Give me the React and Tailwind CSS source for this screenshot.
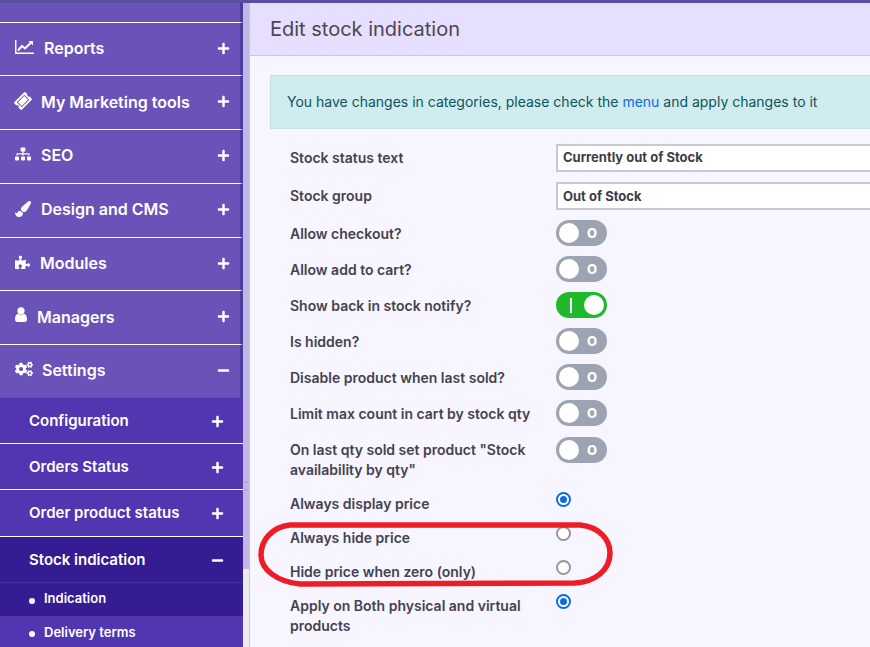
import React from "react";
import { FaTicketAlt, FaSitemap, FaPaintBrush, FaPuzzlePiece, FaCogs, FaPlus, FaMinus } from "react-icons/fa";

const ReportsIcon = () => (
  <svg width="19" height="14" viewBox="0 0 19 14" fill="none" className="-mt-[3px]">
    <path d="M0.75 0v13.25H19" stroke="white" strokeWidth="1.4" />
    <path d="M3 10.5 7 6l3 2.5L16.5 2" stroke="white" strokeWidth="2" />
    <path d="M13.5 1h4.5v4.5z" fill="white" />
  </svg>
);

const ManagerIcon = () => (
  <svg width="12" height="15" viewBox="0 0 12 15" fill="white" className="-mt-[4px]">
    <circle cx="6" cy="3.8" r="3.6" />
    <path d="M0 12.5C0 9 1.5 7 3 6.8c1.8 1.2 4.2 1.2 6 0 1.5.2 3 2.2 3 5.7 0 1.5-1 2.5-2.2 2.5H2.2C1 15 0 14 0 12.5z" />
  </svg>
);

const mainMenu = [
  { label: "Reports", icon: <ReportsIcon />, gap: "gap-[10px]", h: "h-[53px] pb-[2px]" },
  { label: "My Marketing tools", icon: <FaTicketAlt className="text-[16px] -rotate-45 -mt-[2px]" />, gap: "gap-[10px]", h: "h-[54px] pb-[2px]" },
  { label: "SEO", icon: <FaSitemap className="text-[16px] -mt-[2px]" />, gap: "gap-[10px]", h: "h-[54px] pb-[3px]" },
  { label: "Design and CMS", icon: <FaPaintBrush className="text-[16px]" />, gap: "gap-[10px]", h: "h-[54px] pb-[3px]" },
  { label: "Modules", icon: <FaPuzzlePiece className="text-[15px] -mt-[2px]" />, gap: "gap-[10px]", h: "h-[53px] pb-[2px]" },
  { label: "Managers", icon: <ManagerIcon />, gap: "gap-[10px]", h: "h-[54px] pb-[2px]" },
  { label: "Settings", icon: <FaCogs className="text-[18px] -mt-[2px]" />, gap: "gap-[9px]", h: "h-[54px] pb-[3px]", open: true },
];

const subMenu = [
  { label: "Configuration", h: "h-[46px]" },
  { label: "Orders Status", h: "h-[46px]" },
  { label: "Order product status", h: "h-[47px]" },
];

const Toggle = ({ on }) => (
  <div className={`w-[51px] h-[26px] rounded-full flex items-center relative shrink-0 ${on ? "bg-[#1fba2b]" : "bg-[#9ca3b3]"}`}>
    {on ? (
      <>
        <span className="w-[2px] h-[15px] bg-white ml-[14px]"></span>
        <span className="absolute right-[3px] w-[20px] h-[20px] rounded-full bg-white"></span>
      </>
    ) : (
      <>
        <span className="absolute left-[3px] w-[20px] h-[20px] rounded-full bg-white"></span>
        <span className="absolute left-[31px] text-[13px] leading-[26px] font-extrabold text-white">O</span>
      </>
    )}
  </div>
);

const Radio = ({ on }) =>
  on ? (
    <div className="w-[15px] h-[15px] rounded-full border-2 border-[#0d6be0] bg-white flex items-center justify-center shrink-0">
      <span className="w-[7px] h-[7px] rounded-full bg-[#0d6be0]"></span>
    </div>
  ) : (
    <div className="w-[15px] h-[15px] rounded-full border-2 border-[#96969e] bg-white shrink-0"></div>
  );

const Row = ({ label, h = "h-[36px]", labelPad = "", children }) => (
  <div className={`flex items-center pl-[20px] ${h}`}>
    <div className={`w-[266px] pr-[20px] shrink-0 text-[14px] leading-[20px] font-semibold text-[#45424f] ${labelPad}`}>{label}</div>
    {children}
  </div>
);

const toggles = [
  ["Allow checkout?", false],
  ["Allow add to cart?", false],
  ["Show back in stock notify?", true],
  ["Is hidden?", false],
  ["Disable product when last sold?", false],
  ["Limit max count in cart by stock qty", false],
];

const App = () => {
  return (
    <div className="w-[870px] h-[647px] overflow-hidden flex flex-col bg-[#f7f5ff] font-['Inter','Liberation_Sans',sans-serif] relative">
      <div className="h-[3px] bg-[#5a4e9e] shrink-0"></div>

      <div className="flex flex-1 min-h-0">
        {/* Sidebar */}
        <div className="w-[243px] shrink-0 bg-[#6a52b9] text-white overflow-hidden">
          <div className="h-[19px] border-r-[3px] border-r-[#4c3ca0]"></div>
          {mainMenu.map(item => (
            <div key={item.label} className={`${item.h} border-t border-white border-r-[3px] border-r-[#4c3ca0] flex items-center pl-[15px] pr-[10px]`}>
              <div className={`flex items-center flex-1 ${item.gap}`}>
                {item.icon}
                <span className="text-[16px] font-semibold">{item.label}</span>
              </div>
              {item.open ? <FaMinus className="text-[13px]" /> : <FaPlus className="text-[13px]" />}
            </div>
          ))}
          {subMenu.map(item => (
            <div key={item.label} className={`${item.h} bg-[#5235b0] border-b border-white flex items-center pl-[29px] pr-[19px] pt-[1px]`}>
              <span className="flex-1 text-[15px] font-semibold">{item.label}</span>
              <FaPlus className="text-[13px]" />
            </div>
          ))}
          <div className="h-[46px] bg-[#351c92] border-b border-[#43309c] flex items-center pl-[29px] pr-[19px] pt-[1px]">
            <span className="flex-1 text-[15px] font-semibold">Stock indication</span>
            <FaMinus className="text-[13px]" />
          </div>
          <div className="h-[33px] bg-[#351c92] flex items-center pl-[29px] gap-[9px] pb-[1px]">
            <span className="w-[6px] h-[6px] rounded-full bg-white mt-[3px]"></span>
            <span className="text-[13px] font-semibold">Indication</span>
          </div>
          <div className="h-[33px] bg-[#5235b0] flex items-center pl-[29px] gap-[9px]">
            <span className="w-[6px] h-[6px] rounded-full bg-white mt-[2px]"></span>
            <span className="text-[13px] font-semibold">Delivery terms</span>
          </div>
        </div>

        {/* Splitter */}
        <div className="w-[7px] shrink-0 border-r border-[#c9c9cf] flex flex-col">
          <div className="h-[566px] bg-[#c0b8e2] flex justify-center">
            <div className="mt-[478px] w-[2px] h-[10px] border-y-2 border-[#a9a3c9]"></div>
          </div>
          <div className="flex-1 bg-[#ececec]"></div>
        </div>

        {/* Main */}
        <div className="flex-1 min-w-0">
          <div className="h-[53px] bg-[#e7dfff] border-b border-[#cbc8d4] pl-[20px] flex items-center">
            <h1 className="text-[20px] text-[#4a4752]">Edit stock indication</h1>
          </div>

          <div className="pl-[20px] pt-[19px]">
            <div className="h-[54px] bg-[#d1ecee] border border-[#bee5eb] border-r-0 flex items-center pl-[16px] pb-[1px] text-[14px] text-[#0c5460]">
              <span>
                You have changes in categories, please check the <span className="text-[#0d6be0]">menu</span> and apply changes to it
              </span>
            </div>

            <div className="pt-[10px]">
              <Row label="Stock status text" h="h-[38px]">
                <div className="flex-1 h-[28px] border-2 border-r-0 border-[#c9c9d3] bg-white flex items-center pl-[5px] text-[13px] font-bold text-[#3f3c47]">Currently out of Stock</div>
              </Row>
              <Row label="Stock group" h="h-[38px]">
                <div className="flex-1 h-[28px] border-2 border-r-0 border-[#c9c9d3] bg-white flex items-center pl-[5px] pt-[1px] text-[13px] font-bold text-[#3f3c47]">Out of Stock</div>
              </Row>
              {toggles.map(([label, on]) => (
                <Row key={label} label={label} labelPad="mt-[2px]">
                  <Toggle on={on} />
                </Row>
              ))}
              <Row label={'On last qty sold set product "Stock availability by qty"'} h="h-[56px]" labelPad="mt-[2px]">
                <div className="-mt-[18px]"><Toggle on={false} /></div>
              </Row>
              <Row label="Always display price" h="h-[34px]"><div className="-mt-[10px]"><Radio on /></div></Row>
              <Row label="Always hide price" h="h-[34px]"><div className="-mt-[10px]"><Radio /></div></Row>
              <Row label="Hide price when zero (only)" h="h-[34px]"><div className="-mt-[10px]"><Radio /></div></Row>
              <Row label="Apply on Both physical and virtual products" h="h-[54px]"><div className="-mt-[29px]"><Radio on /></div></Row>
            </div>
          </div>
        </div>
      </div>

      {/* Hand drawn highlight */}
      <svg className="absolute left-0 top-0 pointer-events-none" width="870" height="647">
        <path d="M290 525 L580 525 C600 527 610 540 610 553 C610 570 595 582 575 583 L300 584 C278 582 261 570 261 555 C261 540 272 527 290 525 Z" fill="none" stroke="#ee1c25" strokeWidth="5.5" />
      </svg>
    </div>
  );
};

export default App;
